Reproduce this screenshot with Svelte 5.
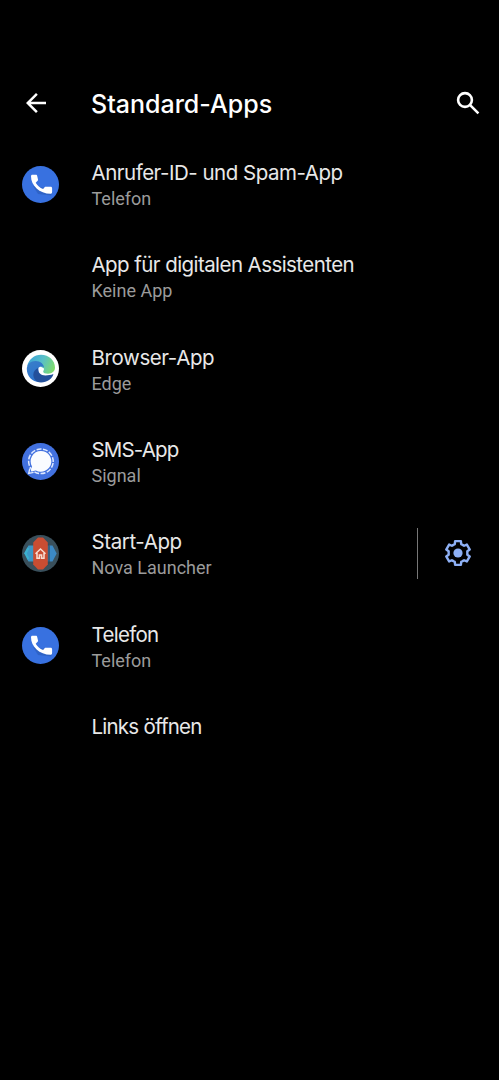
<script>
  const rows = [
    { title: 'Anrufer-ID- und Spam-App', summary: 'Telefon', icon: 'phone', spacing: -0.49 },
    { title: 'App für digitalen Assistenten', summary: 'Keine App', icon: '', spacing: -0.57 },
    { title: 'Browser-App', summary: 'Edge', icon: 'edge', spacing: -0.4 },
    { title: 'SMS-App', summary: 'Signal', icon: 'signal', spacing: -0.85 },
    { title: 'Start-App', summary: 'Nova Launcher', icon: 'nova', spacing: -0.4 },
    { title: 'Telefon', summary: 'Telefon', icon: 'phone', spacing: -0.7 },
    { title: 'Links öffnen', summary: '', icon: '', spacing: -0.77 }
  ];

  // Outline of one gear tooth, repeated six times around the centre.
  const tooth = [[-4.3, -8.3], [-3.2, -8.9], [-2.9, -11.9], [2.9, -11.9], [3.2, -8.9], [4.3, -8.3]];
  const gear = [0, 1, 2, 3, 4, 5]
    .flatMap((i) => {
      const a = (i * Math.PI) / 3;
      return tooth.map(([x, y]) =>
        [x * Math.cos(a) - y * Math.sin(a), x * Math.sin(a) + y * Math.cos(a)]
          .map((n) => n.toFixed(2))
          .join(',')
      );
    })
    .join(' ');
</script>

<main class="screen">
  <header class="bar">
    <button class="back" aria-label="Zurück">
      <svg width="30" height="30" viewBox="0 0 24 24"><path fill="#fff" d="M20 11H7.830l5.590-5.590L12 4l-8 8 8 8 1.410-1.410L7.830 13H20z"/></svg>
    </button>
    <h1>Standard-Apps</h1>
    <button class="search" aria-label="Suchen">
      <svg width="24" height="24" viewBox="0 0 24 24" fill="none" stroke="#fff" stroke-width="2.600"><circle cx="9" cy="9" r="6.900"/><path d="M13.900 13.900L22.400 22.400"/></svg>
    </button>
  </header>

  <ul class="list">
    {#each rows as row}
      <li class="row" class:single={!row.summary}>
        <span class="icon">
          {#if row.icon === 'phone'}
            <svg viewBox="0 0 37 37"><circle cx="18.500" cy="18.500" r="18.500" fill="#3871e0"/>
              <path fill="#24509f" opacity=".4" d="M11 20l5 8 13 1.500 1.500-3-4-4z"/>
              <path fill="#fff" d="M10.400 8.800h3.500c.7 0 1.200.4 1.300 1.100l.8 3.600c.1.500 0 .9-.4 1.300l-1.900 2c1.700 3 4.200 5 7.400 6.300l1.500-1.800c.3-.4.800-.5 1.300-.5h4.800c.8 0 1.400.6 1.400 1.400v4c0 .9-.6 1.500-1.500 1.500C17.500 27.700 9 19.500 9 10.200c0-.8.600-1.400 1.400-1.400z"/></svg>
          {:else if row.icon === 'edge'}
            <svg viewBox="0 0 37 37">
              <defs>
                <linearGradient id="edge-top" x1="0" y1=".3" x2="1" y2=".6"><stop offset="0" stop-color="#3ba4d6"/><stop offset=".5" stop-color="#58bfc9"/><stop offset="1" stop-color="#7fdc6c"/></linearGradient>
                <linearGradient id="edge-left" x1="0" y1="0" x2=".5" y2="1"><stop offset="0" stop-color="#3a7fc9"/><stop offset="1" stop-color="#2b72cc"/></linearGradient>
              </defs>
              <circle cx="18.500" cy="18.500" r="18.500" fill="#fff"/>
              <path fill="url(#edge-top)" d="M5.200 16C6.800 9.500 12.200 4.800 19 4.800c8 0 14 5.900 14 12.700 0 4-3.200 6.200-6.900 6.200-3 0-4.900-1-4.900-2 0-.8.8-1.400.8-3.200L12 13z"/>
              <path fill="url(#edge-left)" d="M4.800 18.800c0-4.700 3.800-7.900 8.800-7.900 5 0 8.400 3.400 8.400 6.800-1-1.400-4.300-2-5.700.6l1 13.900C10.200 32 4.800 26.200 4.800 18.800z"/>
              <path fill="#23509b" d="M16.200 18c-.8 4.200 2.500 7.500 7.200 7.500 3 0 5.300-.4 8-1.400-.9 4.800-6.400 8.500-12.400 8.500-5-.6-7.800-3.900-7.700-8.200.1-3 2.300-5.500 4.900-6.400z"/>
            </svg>
          {:else if row.icon === 'signal'}
            <svg viewBox="0 0 37 37"><circle cx="18.500" cy="18.500" r="18.500" fill="#4271df"/>
              <circle cx="18.900" cy="18.300" r="12.300" fill="none" stroke="#dfe9ff" stroke-width="1.500" stroke-dasharray="4.900 1.540" transform="rotate(8 18.900 18.300)"/>
              <path d="M7.800 25.500l-1.100 4.900 4.900-1.100" fill="none" stroke="#dfe9ff" stroke-width="1.300"/>
              <path fill="#fafcff" d="M18.900 7.900a10.400 10.400 0 1 1-5 19.500l-5.100 1.200 1.200-5.100a10.400 10.400 0 0 1 8.900-15.600z"/></svg>
          {:else if row.icon === 'nova'}
            <svg viewBox="0 0 37 37"><circle cx="18.500" cy="18.500" r="18.500" fill="#394f5b"/>
              <path fill="#3c98c7" d="M6.500 10.500H12v16H6.500L5 24l1-3-4-2.500z"/>
              <path fill="#3c89c5" d="M25 10.500h5.500l4.200 8-4.200 8H25z"/>
              <path fill="#3bb0cf" d="M2.300 18.500l3-6 2 1-2.500 5 2.500 5-2 1z"/>
              <path fill="#2c4858" opacity=".6" d="M25.500 8l2.500 3v17l-2.500 3z"/>
              <path fill="#c94d32" d="M11.200 7.500L16 2.500h5l4.800 5v22l-4.800 5h-5l-4.800-5z"/>
              <path fill="none" stroke="#f8ddd2" stroke-width="1.500" d="M13.500 18.700l5-4.700 5 4.700M15 18v5.200h2.400V20h2.200v3.200H22V18"/></svg>
          {/if}
        </span>
        <div class="text">
          <div class="title"><span style="letter-spacing: {row.spacing}px">{row.title}</span></div>
          {#if row.summary}<div class="summary">{row.summary}</div>{/if}
        </div>
        {#if row.icon === 'nova'}
          <button class="settings" aria-label="Einstellungen">
            <svg width="28" height="28" viewBox="-14 -14 28 28"><polygon points={gear} fill="none" stroke="#8eb0f5" stroke-width="2.400" stroke-linejoin="round"/><circle r="4.600" fill="#8eb0f5"/></svg>
          </button>
        {/if}
      </li>
    {/each}
  </ul>
</main>

<style>
  :global(body) { background: #000; }
  .screen { min-height: 1080px; box-sizing: border-box; padding-top: 68px; background: #000; color: #e8e8e8; font-family: Inter, Roboto, sans-serif; }
  button { border: 0; padding: 0; background: none; display: flex; align-items: center; justify-content: center; }
  svg { display: block; }
  .bar { display: flex; align-items: center; height: 70px; }
  .back { width: 71px; height: 70px; padding-bottom: 1px; }
  h1 { margin: 0 0 0 20px; flex: 1; font-size: 25px; line-height: 31px; font-weight: 500; color: #fff; white-space: nowrap; padding-top: 2px; }
  .search { width: 62px; height: 68px; padding-bottom: 1px; }
  .list { list-style: none; margin: 0; padding: 0; }
  .row { display: flex; align-items: center; height: 92.300px; }
  .row.single { height: 68px; }
  .icon { width: 37px; height: 37px; margin-left: 22px; flex: none; }
  .text { flex: 1; margin: 3px 0 0 32.500px; }
  .title { font-size: 20.500px; line-height: 26px; white-space: nowrap; }
  .summary { font-family: Roboto, sans-serif; font-size: 18px; line-height: 25px; color: #9b9b9b; }
  .settings { width: 82px; height: 51px; border-left: 1px solid #777; padding-right: 1px; }
</style>
